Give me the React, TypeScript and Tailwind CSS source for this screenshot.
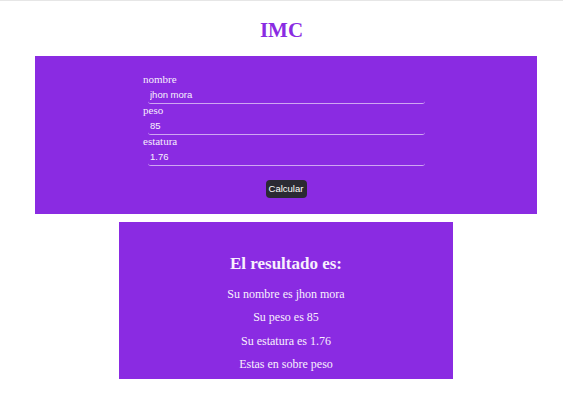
import { useState } from "react";

export default function App() {
  const [nombre, setNombre] = useState("jhon mora");
  const [peso, setPeso] = useState("85");
  const [estatura, setEstatura] = useState("1.76");

  const fields = [
    { label: "nombre", value: nombre, set: setNombre },
    { label: "peso", value: peso, set: setPeso },
    { label: "estatura", value: estatura, set: setEstatura },
  ];

  return (
    <div className="min-h-[405px] w-[563px] border-t border-[#e6e6e6] bg-white">
      <div className="h-[55px] pt-[17px] text-center">
        <h1 className="font-['Liberation_Serif',serif] text-[21px] font-bold leading-[24px] text-[#8a2be2]">
          IMC
        </h1>
      </div>

      <div className="ml-[35px] w-[502px] bg-[#8a2be2] pt-[17px] pb-[16px]">
        <div className="ml-[108px] w-[282px]">
          {fields.map((f) => (
            <div key={f.label}>
              <label className="block font-['Liberation_Serif',serif] text-[11px] leading-[13px] text-[#f6eefc]">
                {f.label}
              </label>
              <input
                value={f.value}
                onChange={(e) => f.set(e.target.value)}
                className="ml-[5px] block h-[18px] w-[277px] rounded-[3px] border-b border-[#cfa6f2] bg-transparent px-[2px] font-['Liberation_Sans',sans-serif] text-[9.5px] text-[#f8f2fd] outline-none"
              />
            </div>
          ))}
        </div>
        <div className="mt-[14px] flex justify-center">
          <button className="h-[18px] w-[41px] rounded-[4px] bg-[#2b2a33] font-['Liberation_Sans',sans-serif] text-[9.5px] leading-[18px] text-white">
            Calcular
          </button>
        </div>
      </div>

      <div className="ml-[119px] mt-[8px] w-[334px] bg-[#8a2be2] pt-[32px] pb-[3px] text-center font-['Liberation_Serif',serif] text-[#f8f0fd]">
        <h2 className="text-[17px] font-bold leading-[20px]">El resultado es:</h2>
        <div className="mt-[9px]">
          <p className="text-[12px] leading-[23.3px]">Su nombre es {nombre}</p>
          <p className="text-[12px] leading-[23.3px]">Su peso es {peso}</p>
          <p className="text-[12px] leading-[23.3px]">Su estatura es {estatura}</p>
          <p className="text-[12px] leading-[23.3px]">Estas en sobre peso</p>
        </div>
      </div>
    </div>
  );
}
